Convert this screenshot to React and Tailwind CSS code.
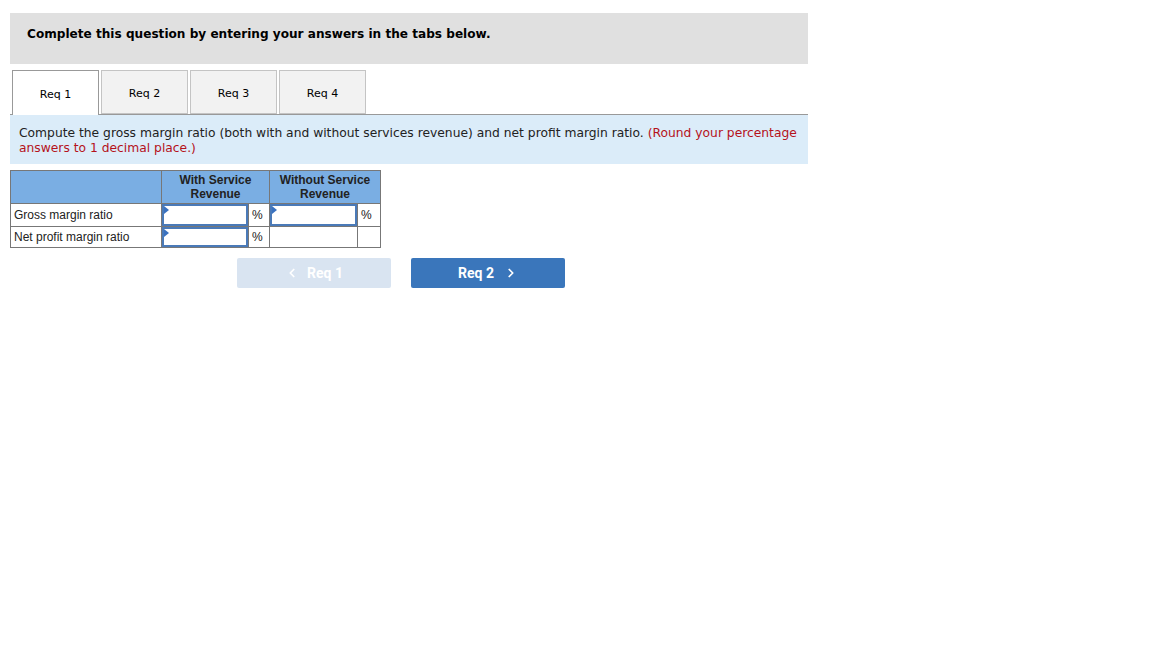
import { ChevronLeft, ChevronRight } from 'lucide-react';

const verdana = { fontFamily: '"DejaVu Sans", Verdana, sans-serif' };

function Tab({ label, active }) {
  return active ? (
    <div className="w-[87px] h-[45px] -mb-px pt-[5px] bg-white border border-[#999] border-b-0 flex items-center justify-center text-[11px] text-black">
      {label}
    </div>
  ) : (
    <div className="w-[87px] h-[44px] pt-[5px] bg-[#f2f2f2] border border-[#c4c4c4] flex items-center justify-center text-[11px] text-black">
      {label}
    </div>
  );
}

function AnswerInput() {
  return (
    <div className="relative h-full border-2 border-[#4a7ab8] bg-white">
      <span className="absolute left-0 top-0 w-0 h-0 border-t-[4px] border-b-[4px] border-l-[5px] border-t-transparent border-b-transparent border-l-[#3a72c0]" />
    </div>
  );
}

export default function App() {
  return (
    <div className="min-h-[648px] bg-white pt-[13px] pl-[10px]" style={verdana}>
      <div className="w-[798px]">
        <div className="h-[51px] bg-[#e0e0e0] pl-[17px] pt-[14px]">
          <p className="text-[12.1px] leading-[14px] font-bold text-black">Complete this question by entering your answers in the tabs below.</p>
        </div>

        <div className="mt-[6px] pl-[2px] flex gap-[2px] border-b border-[#999]">
          <Tab label="Req 1" active />
          <Tab label="Req 2" />
          <Tab label="Req 3" />
          <Tab label="Req 4" />
        </div>

        <div className="bg-[#dbecf9] px-[9px] pt-[11px] pb-[8px] text-[12.3px] leading-[15px] text-[#222]">
          Compute the gross margin ratio (both with and without services revenue) and net profit margin ratio.{' '}
          <span className="text-[#b5121b]">(Round your percentage answers to 1 decimal place.)</span>
        </div>

        <table className="mt-[6px] border-collapse text-[12px] text-[#222]" style={{ fontFamily: '"Liberation Sans", Arial, sans-serif' }}>
          <thead>
            <tr className="bg-[#7aaee3] h-[33px]">
              <th className="w-[151px] border border-[#777]"></th>
              <th colSpan={2} className="w-[108px] border border-[#777] font-bold leading-[14px] text-[#222]">With Service<br />Revenue</th>
              <th colSpan={2} className="w-[111px] border border-[#777] font-bold leading-[14px] text-[#222]">Without Service<br />Revenue</th>
            </tr>
          </thead>
          <tbody>
            <tr className="h-[23px]">
              <td className="border border-[#777] px-[3px]">Gross margin ratio</td>
              <td className="w-[87px] border border-[#777] p-0 h-[23px]"><AnswerInput /></td>
              <td className="w-[21px] border border-[#777] px-[3px]">%</td>
              <td className="w-[88px] border border-[#777] p-0 h-[23px]"><AnswerInput /></td>
              <td className="w-[23px] border border-[#777] px-[3px]">%</td>
            </tr>
            <tr className="h-[21px]">
              <td className="border border-[#777] px-[3px]">Net profit margin ratio</td>
              <td className="border border-[#777] p-0 h-[21px]"><AnswerInput /></td>
              <td className="border border-[#777] px-[3px]">%</td>
              <td className="border border-[#777]"></td>
              <td className="border border-[#777]"></td>
            </tr>
          </tbody>
        </table>

        <div className="mt-[10px] pl-[227px] flex gap-[20px]" style={{ fontFamily: 'Roboto, sans-serif' }}>
          <div className="w-[154px] h-[30px] bg-[#d9e4f1] rounded-[2px] flex items-center justify-center gap-[8px] text-white text-[14px] font-bold">
            <ChevronLeft className="w-[14px] h-[14px]" strokeWidth={3} />
            <span>Req 1</span>
          </div>
          <div className="w-[154px] h-[30px] bg-[#3a76bb] rounded-[2px] flex items-center justify-center gap-[10px] text-white text-[14px] font-bold">
            <span>Req 2</span>
            <ChevronRight className="w-[14px] h-[14px]" strokeWidth={3} />
          </div>
        </div>
      </div>
    </div>
  );
}
